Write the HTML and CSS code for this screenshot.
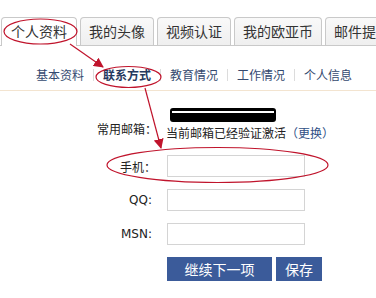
FILE: index.html
```html
<!DOCTYPE html>
<html lang="zh-CN">
<head>
    <meta charset="UTF-8">
    <title>个人资料 - 联系方式</title>
    <link rel="stylesheet" href="styles.css">
</head>
<body>
    <div class="page">
        <ul class="tabs">
            <li class="tab active">个人资料</li>
            <li class="tab">我的头像</li>
            <li class="tab">视频认证</li>
            <li class="tab">我的欧亚币</li>
            <li class="tab">邮件提醒</li>
        </ul>

        <div class="subnav">
            <a>基本资料</a>
            <span class="sep"></span>
            <a class="current">联系方式</a>
            <span class="sep"></span>
            <a>教育情况</a>
            <span class="sep"></span>
            <a>工作情况</a>
            <span class="sep"></span>
            <a>个人信息</a>
        </div>

        <form class="form">
            <div class="row email-row">
                <label>常用邮箱：</label>
                <div class="email">
                    <span class="redacted"></span>
                    <p>当前邮箱已经验证激活<a>（更换）</a></p>
                </div>
            </div>
            <div class="row">
                <label for="mobile" class="cjk">手机：</label>
                <input type="text" id="mobile">
            </div>
            <div class="row">
                <label for="qq" class="latin">QQ:</label>
                <input type="text" id="qq">
            </div>
            <div class="row">
                <label for="msn" class="latin">MSN:</label>
                <input type="text" id="msn">
            </div>
            <div class="actions">
                <button type="button" class="btn btn-next">继续下一项</button>
                <button type="button" class="btn">保存</button>
            </div>
        </form>

        <!-- red hand-drawn annotations -->
        <svg class="marks" width="376" height="298" viewBox="0 0 376 298">
            <defs>
                <marker id="head" markerWidth="10" markerHeight="10" refX="9" refY="5" orient="auto" markerUnits="userSpaceOnUse">
                    <path d="M0,0 L10,5 L0,10 Z" fill="#c0142c"/>
                </marker>
            </defs>
            <ellipse cx="40.5" cy="31.5" rx="36.5" ry="12.5"/>
            <line x1="70" y1="44" x2="103" y2="67" marker-end="url(#head)"/>
            <ellipse cx="128.5" cy="77" rx="32.5" ry="10.5"/>
            <line x1="145" y1="88" x2="161" y2="148" marker-end="url(#head)"/>
            <ellipse cx="217.5" cy="165" rx="110.5" ry="17.5"/>
        </svg>
    </div>
</body>
</html>
```

FILE: styles.css
```css
body {
    margin: 0;
    background: #fff;
    font-family: "Noto Sans CJK SC", sans-serif;
    color: #333;
}
.page {
    position: relative;
    width: 376px;
    height: 298px;
    overflow: hidden;
}
.tabs {
    display: flex;
    gap: 3px;
    list-style: none;
    margin: 0;
    padding: 17px 0 0 1px;
    border-bottom: 1px solid #c9c9c9;
    white-space: nowrap;
}
.tab {
    flex-shrink: 0;
    height: 27px;
    line-height: 27px;
    padding: 0 8px;
    border: 1px solid #c9c9c9;
    border-bottom: none;
    border-radius: 4px 4px 0 0;
    background: linear-gradient(#f9f9f9, #efefef);
    font-size: 14px;
    color: #333;
}
.tab.active {
    padding: 0 9px;
    height: 28px;
    margin-bottom: -1px;
    background: #fff;
}
.subnav {
    display: flex;
    align-items: center;
    height: 16px;
    padding: 21px 0 7px 36px;
    border-bottom: 1px solid #f3e4d0;
    font-size: 12px;
    line-height: 16px;
    color: #34496f;
    white-space: nowrap;
}
.subnav .current {
    font-weight: bold;
    color: #25395e;
}
.sep {
    width: 1px;
    height: 12px;
    margin: 0 9px;
    background: #dcdcdc;
}
.form {
    padding-top: 16px;
}
.row {
    display: grid;
    grid-template-columns: 152px 138px;
    column-gap: 15px;
    align-items: center;
    height: 22px;
    margin-bottom: 12px;
    font-size: 12px;
}
.row label {
    text-align: right;
    color: #222;
}
.row .cjk {
    margin-right: -4px;
}
.row .latin {
    font-family: "DejaVu Sans", sans-serif;
    font-size: 12px;
}
.email-row {
    grid-template-columns: 152px 200px;
    column-gap: 14px;
    align-items: start;
    height: auto;
    margin-bottom: 14px;
}
.email-row label {
    padding-top: 13px;
    margin-right: -5px;
}
.email {
    display: flex;
    flex-direction: column;
    align-items: flex-start;
}
.redacted {
    position: relative;
    width: 106px;
    height: 14px;
    margin: 1px 0 3px 4px;
    border-radius: 3px;
    background: #000;
}
.redacted::after {
    content: "";
    position: absolute;
    left: 2px;
    right: 2px;
    top: 3px;
    height: 2px;
    background: #fff;
}
.email p {
    margin: 0;
    line-height: 16px;
    color: #222;
    white-space: nowrap;
}
.email a {
    color: #2f4f86;
}
.row input {
    box-sizing: border-box;
    width: 138px;
    height: 22px;
    margin: 0;
    border: 1px solid #d4d4d4;
    background: #fff;
}
.actions {
    display: flex;
    gap: 4px;
    padding-left: 167px;
}
.btn {
    width: 46px;
    height: 24px;
    padding: 0;
    border: none;
    background: #3b5b9a;
    color: #fff;
    font-family: inherit;
    font-size: 14px;
}
.btn-next {
    width: 105px;
}
.marks {
    position: absolute;
    top: 0;
    left: 0;
    pointer-events: none;
}
.marks ellipse,
.marks line {
    fill: none;
    stroke: #c0142c;
    stroke-width: 1.2;
}
```
